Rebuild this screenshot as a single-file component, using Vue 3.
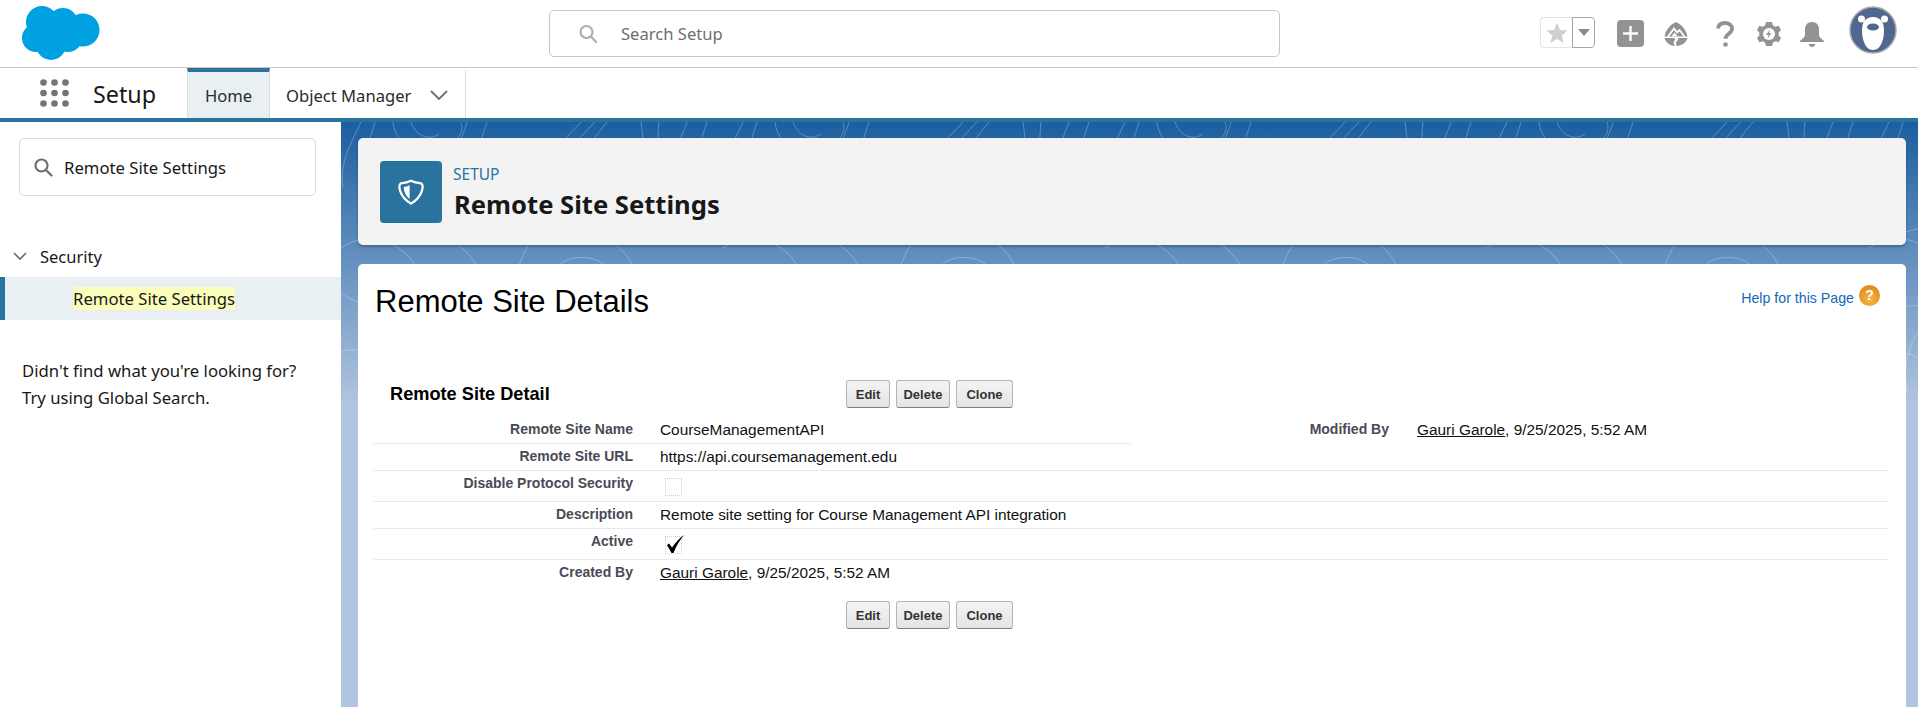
<script setup>
const tabs = ['Edit', 'Delete', 'Clone']
const dots = [3.5, 14.5, 25.5].flatMap((cx) => [3.5, 14, 24.5].map((cy) => ({ cx, cy })))
const rows = [
  { label: 'Disable Protocol Security', kind: 'box', cls: 'tall' },
  { label: 'Description', text: 'Remote site setting for Course Management API integration' },
  { label: 'Active', kind: 'check', cls: 'tall' }
]
const contours = [
  'M20 0c-10 22-22 40-18 66 M34 0c-6 20-16 44-10 70 M52 0c2 24 32 42 56 24 14-10 14-18 12-24 M70 0c4 12 16 20 28 12 M126 0c-6 22-22 44-14 72 M146 0c-4 14-14 34-12 70',
  'M178 70c20-30 46-52 62-70 M196 70c18-26 38-50 58-70 M214 72c16-22 32-48 52-72 M262 40c8-10 18-14 26-8 M300 0c4 26 2 50 6 70 M318 0c-2 20-2 44 2 70 M346 0c-8 22-22 50-14 72 M366 0c-4 12-10 30-10 44',
  'M-6 130c30-24 62-12 78 10s-6 46-36 44-62-24-42-54z M30 112c50-18 96 6 110 40 M200 110c30-10 76 0 92 34 16 34-14 60-50 58s-76-34-62-64c4-10 10-22 20-28z M222 140c14-8 40-6 46 10s-12 28-28 24-30-24-18-34z',
  'M-10 232c34-12 64 2 88 24s64 28 100 8 M60 200c-14 12-28 30-22 70 M170 190c-18 10-34 40-30 80 M236 196c28 26 60 30 88 22s46 0 60 18 M300 258c20-18 50-22 84-12 M240 252a6 6 0 1 0 0.1 0z'
]
</script>

<template>
  <div class="page">
    <header class="top">
      <svg class="logo" width="78" height="56" viewBox="0 0 78 56" aria-label="Salesforce">
        <g fill="#00a1e0">
          <circle cx="20" cy="17" r="16" /><circle cx="41" cy="18" r="15" /><circle cx="61" cy="25" r="16.500" />
          <circle cx="14" cy="33" r="14" /><circle cx="29" cy="40" r="15" /><circle cx="46" cy="33" r="14" />
        </g>
      </svg>
      <div class="global-search">
        <svg width="20" height="20" viewBox="0 0 20 20" fill="none" stroke="#b0adab" stroke-width="2.200">
          <circle cx="8.500" cy="8" r="6" /><path d="M13 12.500l5 5.500" stroke-linecap="round" />
        </svg>
        <span>Search Setup</span>
      </div>
      <div class="actions">
        <div class="fav">
          <div class="fav-star">
            <svg width="22" height="22" viewBox="0 0 22 22"><path fill="#cfcfcf" d="M11 1l3 7 7.500.6-5.700 4.900 1.800 7.500L11 17l-6.600 4 1.800-7.500L.5 8.600 8 8z" /></svg>
          </div>
          <div class="fav-drop"><i></i></div>
        </div>
        <svg class="ic-plus" width="27" height="27" viewBox="0 0 27 27">
          <rect width="27" height="27" rx="4" fill="#939393" /><path d="M13.500 6v15M6 13.500h15" stroke="#fff" stroke-width="2.400" />
        </svg>
        <svg class="ic-trail" width="26" height="26" viewBox="0 0 26 26">
          <path fill="#939393" d="M13 1c5 2 10 7 11.500 14.500h-23C3 8 8 3 13 1zM1.500 17h9.500l1.500 1.500-2 2.500 1 4C7 24.500 3 22 1.500 17zM24.500 17c-1.500 5-5.500 7.500-11 8l-.5-4 2.500-2.500-1-1.500z" />
          <path fill="none" stroke="#fff" stroke-width="1.800" d="M5 15.500l6-8 3 4 2.500-2.500 5 6.500M9.500 15.500l2-2.500 2 2.500" />
        </svg>
        <svg class="ic-help" width="18" height="26" viewBox="0 0 18 26" fill="none">
          <path stroke="#939393" stroke-width="3.800" d="M2 7.500C2.500 3.500 5.500 2 9 2c4 0 7 2.300 7 5.800 0 5-6.500 5-6.500 10" />
          <circle cx="9.500" cy="23.500" r="2.300" fill="#939393" />
        </svg>
        <svg class="ic-gear" width="24" height="26" viewBox="0 0 24 26">
          <path fill="#939393" d="M9 1h6l.8 3.200 2.600 1.500 3.200-.9 2.400 4.200-2.300 2.400v3.200l2.300 2.400-2.400 4.200-3.200-.9-2.600 1.500L15 25H9l-.8-3.200-2.600-1.500-3.200.9L0 17l2.300-2.400v-3.200L0 9l2.400-4.200 3.200.9 2.600-1.500z" />
          <circle cx="12" cy="13" r="6" fill="#fff" />
          <path fill="#939393" d="M13 8.500l-4 5.500h2.500l-1 3.500 4-5.200h-2.500z" />
        </svg>
        <svg class="ic-bell" width="26" height="26" viewBox="0 0 26 26">
          <path fill="#939393" d="M13 1c4.500 0 7 3 7 7.500v5c0 3 3 4.500 5 6.500v1H1v-1c2-2 5-3.500 5-6.500v-5C6 4 8.500 1 13 1zM9.500 23h7c-.5 1.800-2 3-3.500 3s-3-1.200-3.500-3z" />
        </svg>
        <svg class="ic-avatar" width="48" height="48" viewBox="0 0 48 48">
          <circle cx="24" cy="24" r="23" fill="#50688f" stroke="#a9a9a9" stroke-width="1.500" />
          <circle cx="12.500" cy="13" r="3.500" fill="#fff" /><circle cx="35.500" cy="13" r="3.500" fill="#fff" />
          <path fill="#fff" d="M24 11c7 0 11 5 11 13 0 9-3 20-11 20s-11-11-11-20c0-8 4-13 11-13z" />
          <ellipse cx="24" cy="21" rx="6" ry="3.600" fill="#50688f" />
        </svg>
      </div>
    </header>

    <nav class="nav">
      <svg class="launcher" width="29" height="28" viewBox="0 0 29 28" fill="#747474">
        <circle v-for="(d, i) in dots" :key="i" :cx="d.cx" :cy="d.cy" r="3.300" />
      </svg>
      <span class="nav-title">Setup</span>
      <div class="tab active">Home</div>
      <div class="tab">
        Object Manager
        <svg width="18" height="11" viewBox="0 0 18 11" fill="none" stroke="#706e6b" stroke-width="1.800"><path d="M1 1l8 8 8-8" /></svg>
      </div>
    </nav>

    <div class="body">
      <aside class="side">
        <div class="side-search">
          <svg width="19" height="19" viewBox="0 0 19 19" fill="none" stroke="#706e6b" stroke-width="2.200">
            <circle cx="7.500" cy="7.500" r="6" /><path d="M12 12l5.500 5.500" stroke-linecap="round" />
          </svg>
          <span>Remote Site Settings</span>
        </div>
        <div class="tree-head">
          <svg width="14" height="9" viewBox="0 0 14 9" fill="none" stroke="#706e6b" stroke-width="1.700"><path d="M1 1l6 6 6-6" /></svg>
          Security
        </div>
        <div class="tree-item"><mark>Remote Site Settings</mark></div>
        <p class="hint">Didn't find what you're looking for?<br />Try using Global Search.</p>
      </aside>

      <main class="main">
        <svg class="contours" width="1577" height="280" aria-hidden="true">
          <defs>
            <pattern id="topo" width="382" height="280" patternUnits="userSpaceOnUse">
              <path v-for="(d, i) in contours" :key="i" :d="d" fill="none" stroke="#fff" stroke-width="1" />
            </pattern>
          </defs>
          <rect width="1577" height="280" fill="url(#topo)" />
        </svg>

        <section class="page-head">
          <div class="head-icon">
            <svg width="26" height="28" viewBox="0 0 28 28">
              <path fill="none" stroke="#fff" stroke-width="2.400" d="M14 2c3 1.600 7 2.400 11 2.800 2 1 1.600 5 .6 8.200C24 18 20 23 14 26.500 8 23 4 18 2.400 13c-1-3.200-1.400-7.200.6-8.200C7 4.400 11 3.600 14 2z" />
              <path fill="#fff" d="M12.500 6.500v15C8.500 18 6 13 6.200 8.500c2.200 0 4.300-.6 6.300-2z" />
            </svg>
          </div>
          <div class="head-text">
            <div class="eyebrow">SETUP</div>
            <h1>Remote Site Settings</h1>
          </div>
        </section>

        <section class="card">
          <div class="title-row">
            <h2>Remote Site Details</h2>
            <div class="help">
              <span>Help for this Page</span>
              <i class="help-ic">?</i>
            </div>
          </div>

          <div class="detail-head">
            <h3>Remote Site Detail</h3>
            <div class="btns"><button v-for="t in tabs" :key="t" :class="t.toLowerCase()">{{ t }}</button></div>
          </div>

          <div class="row-split">
            <div class="row first">
              <div class="lbl">Remote Site Name</div>
              <div class="val">CourseManagementAPI</div>
            </div>
            <div class="mod">
              <div class="lbl">Modified By</div>
              <div class="val mod-val"><u>Gauri Garole</u>, 9/25/2025, 5:52 AM</div>
            </div>
          </div>
          <div class="row">
            <div class="lbl">Remote Site URL</div>
            <div class="val">https://api.coursemanagement.edu</div>
          </div>
          <div v-for="r in rows" :key="r.label" class="row" :class="r.cls">
            <div class="lbl">{{ r.label }}</div>
            <div v-if="r.text" class="val">{{ r.text }}</div>
            <div v-else class="val"><span class="cb">
              <svg v-if="r.kind === 'check'" class="tick" width="21" height="21" viewBox="0 0 21 21"><path d="M2 11l2-1.500 3 4C10 9 14 4.500 19 1c-4 5-8 11-10.500 18h-2z" /></svg>
            </span></div>
          </div>
          <div class="row last">
            <div class="lbl">Created By</div>
            <div class="val"><u>Gauri Garole</u>, 9/25/2025, 5:52 AM</div>
          </div>
          <div class="btns bottom"><button v-for="t in tabs" :key="'b' + t" :class="t.toLowerCase()">{{ t }}</button></div>
        </section>
      </main>
    </div>
  </div>
</template>

<style scoped>
.page { width: 1918px; height: 707px; overflow: hidden; background: #fff; font-family: "Noto Sans", "Open Sans", sans-serif; color: #181818; }
.top { height: 67px; display: flex; align-items: center; border-bottom: 1px solid #c9c9c9; position: relative; }
.logo { margin: 5px 0 0 22px; flex: none; align-self: flex-start; }
.global-search { position: absolute; left: 549px; top: 10px; width: 729px; height: 45px; border: 1px solid #c9c7c5; border-radius: 5px; display: flex; align-items: center; }
.global-search svg { margin-left: 28px; }
.global-search span { margin-left: 23px; font-size: 16.600px; color: #706e6b; }
.actions { margin-left: auto; margin-right: 21px; display: flex; align-items: center; }
.fav { display: flex; width: 55px; height: 31px; margin-right: 22px; margin-top: -2px; }
.fav-star { width: 31px; border: 1px solid #e3e3e3; border-right: 0; border-radius: 4px 0 0 4px; display: flex; align-items: center; justify-content: center; }
.fav-drop { flex: 1; border: 1px solid #a6a6a6; border-radius: 0 4px 4px 0; display: flex; align-items: center; justify-content: center; }
.fav-drop i { width: 0; height: 0; border: 6px solid transparent; border-top: 7px solid #8a8a8a; border-bottom: 0; }
.ic-plus { margin-right: 19px; }
.ic-trail { margin-right: 27px; }
.ic-help { margin-right: 23px; }
.ic-gear { margin-right: 18px; }
.ic-bell { margin-right: 24px; }
.ic-avatar { margin-top: -8px; }

.nav { height: 50px; display: flex; align-items: stretch; border-bottom: 4px solid #2a739e; }
.launcher { margin: 11px 0 0 40px; flex: none; }
.nav-title { font-size: 23.300px; margin-left: 24px; line-height: 52px; width: 94px; }
.tab { padding: 0 16px; font-size: 16.600px; display: flex; align-items: center; gap: 19px; border-right: 1px solid #dddbda; color: #2b2b2b; border-top: 4px solid transparent; box-sizing: border-box; height: 50px; }
.tab.active { background: #e9f0f3; border-top-color: #2a739e; width: 83px; justify-content: center; padding: 0; border-left: 1px solid #dddbda; }
.tab:last-child { width: 196px; }

.body { display: flex; height: 585px; }
.side { width: 341px; flex: none; background: #fff; padding-top: 16px; box-sizing: border-box; }
.side-search { margin-left: 19px; width: 297px; height: 58px; box-sizing: border-box; border: 1px solid #dddbda; border-radius: 5px; display: flex; align-items: center; padding-left: 14px; font-size: 16.700px; gap: 11px; }
.tree-head { margin-top: 43px; height: 34px; display: flex; align-items: center; gap: 13px; padding-left: 13px; font-size: 16.500px; }
.tree-item { height: 43px; margin-top: 4px; background: #e9f0f3; border-left: 5px solid #2a739e; padding-left: 68px; display: flex; align-items: center; font-size: 16.700px; }
mark { background: #fbfdbb; color: #181818; padding: 0; line-height: 23px; }
.hint { margin: 38px 0 0 22px; font-size: 16.700px; line-height: 26.500px; }

.main { flex: 1; position: relative; padding: 16px 12px 0 17px; background: linear-gradient(#1b5e9f 0, #b0c4df 280px); }
.contours { position: absolute; left: 0; top: 0; opacity: .28; }
.page-head { position: relative; height: 107px; background: #f3f3f3; border-radius: 5px; box-shadow: 0 2px 3px rgba(0, 0, 0, .25); display: flex; align-items: center; padding-left: 22px; gap: 12px; }
.head-icon { width: 62px; height: 62px; background: #2a739f; border-radius: 4px; display: flex; align-items: center; justify-content: center; }
.head-text { padding-top: 3px; }
.eyebrow { font-size: 15.500px; color: #2a739e; line-height: 18px; margin-left: -1px; }
h1 { margin: 5px 0 0; font-size: 25.600px; font-weight: 700; line-height: 34px; }
.card { position: relative; margin-top: 19px; height: 500px; background: #fff; border-radius: 5px 5px 0 0; padding: 0 17px 0 16px; font-family: "Liberation Sans", Arial, sans-serif; color: #000; }
.title-row { display: flex; justify-content: space-between; height: 116px; }
h2 { margin: 21px 0 0 1px; font-size: 31px; font-weight: 400; line-height: 34px; }
.help { display: flex; gap: 5px; margin: 20px 9px 0 0; height: 22px; align-items: center; color: #1468b8; font-size: 14.200px; }
.help span { padding-top: 5px; }
.help-ic { width: 21px; height: 21px; border-radius: 50%; background: radial-gradient(circle at 50% 70%, #f8b44a, #d97f0a); color: #fff; font: 700 14px/21px "Liberation Sans", sans-serif; text-align: center; }
.detail-head { display: flex; align-items: center; height: 28px; padding-left: 16px; margin-bottom: 9px; }
h3 { margin: 0; font-size: 18.200px; font-weight: 700; width: 456px; white-space: nowrap; }
.btns { display: flex; gap: 6px; }
button { height: 28px; padding: 0; border: 1px solid #b5b5b5; border-bottom-color: #7f7f7f; border-radius: 3px; background: linear-gradient(#f4f4f4, #e4e4e4); font: 700 13px "Liberation Sans", sans-serif; color: #333; }
button.edit { width: 44px; }
button.delete { width: 54px; }
button.clone { width: 57px; }
.btns.bottom { margin: 15px 0 0 472px; }
.row-split { display: flex; }
.row { display: flex; align-items: flex-start; border-bottom: 1px solid #e6e8ea; padding-top: 4px; height: 22px; }
.row.tall { height: 26px; }
.row.first { width: 756px; flex: none; }
.row.last { border-bottom: 0; }
.mod { display: flex; padding-top: 4px; }
.lbl { width: 259px; flex: none; text-align: right; font-size: 14px; font-weight: 700; color: #4a4a56; }
.val { margin-left: 27px; font-size: 15.400px; color: #111; position: relative; }
.mod-val { margin-left: 28px; }
.cb { display: block; width: 15px; height: 16px; border: 1px dotted #cfcfcf; margin: 3px 0 0 5px; position: relative; }
.tick { position: absolute; left: -1px; top: -3px; fill: #000; }
</style>
